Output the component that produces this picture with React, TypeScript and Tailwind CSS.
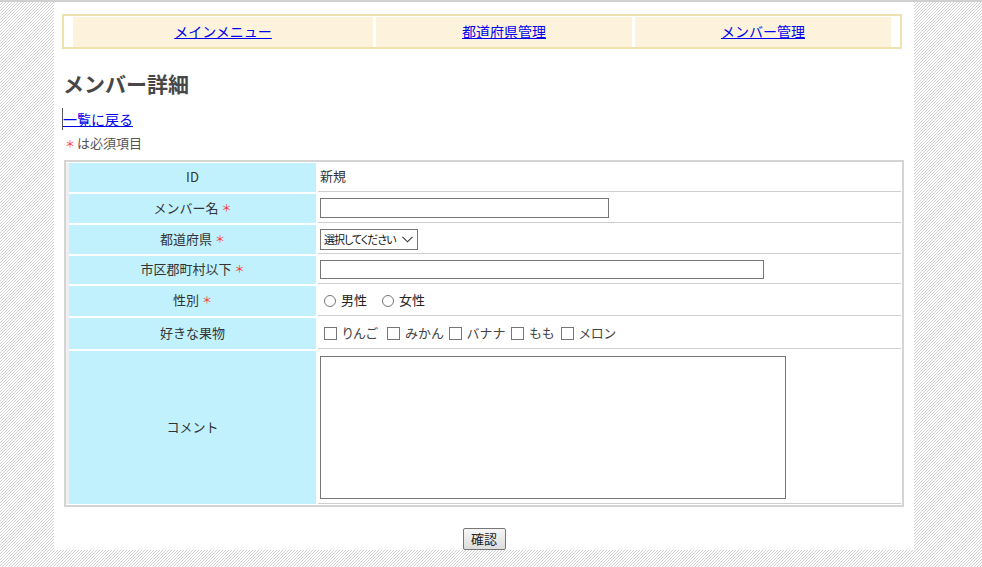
import React from "react";

function Req() {
  return <span className="ml-[3px] text-[10px] text-[#ff3030] leading-none">＊</span>;
}

function LeftCell({ children }: { children: React.ReactNode }) {
  return (
    <div className="flex items-center justify-center bg-[#c1f1fd] pb-[2px] text-[13px] text-[#333]">
      {children}
    </div>
  );
}

function RightCell({ children, className = "" }: { children?: React.ReactNode; className?: string }) {
  return (
    <div className={"flex border-b border-[#cfcfcf] pl-[2px] text-[13px] text-[#333] " + className}>
      {children}
    </div>
  );
}

function Radio({ label, className = "" }: { label: string; className?: string }) {
  return (
    <span className={"inline-flex items-center gap-[5px] " + className}>
      <span className="inline-block h-[12px] w-[12px] rounded-full border border-[#767676] bg-white" />
      <span className="mb-[1px] text-[13px] text-[#222]">{label}</span>
    </span>
  );
}

function Check({ label, className = "" }: { label: string; className?: string }) {
  return (
    <span className={"inline-flex items-center gap-[5px] " + className}>
      <span className="inline-block h-[13px] w-[13px] shrink-0 border border-[#767676] bg-white" />
      <span className="mb-[1px] whitespace-nowrap text-[13px] tracking-[0.5px] text-[#444] [font-feature-settings:'palt']">{label}</span>
    </span>
  );
}

export default function App() {
  return (
    <div className="h-[567px] w-full overflow-hidden border-t-2 border-[#d0d0d0] bg-[repeating-linear-gradient(135deg,#d0d0d0_0px,#d0d0d0_0.7071px,#ffffff_0.7071px,#ffffff_2.1213px)] font-['Noto_Sans_CJK_JP','Liberation_Sans',sans-serif]">
      <div className="ml-[54px] flex w-[860px] flex-col bg-white pt-[12px]">
        {/* nav */}
        <div className="ml-[8px] flex w-[840px] gap-[3px] border-2 border-[#eee3ae] px-[9px] pt-px">
          <div className="flex h-[30px] w-[300px] items-center justify-center bg-[#fdf3dd] pb-[2px]">
            <a className="text-[14px] text-[#0000ee] underline" href="#">メインメニュー</a>
          </div>
          <div className="flex h-[30px] flex-1 items-center justify-center bg-[#fdf3dd] pb-[2px]">
            <a className="text-[14px] text-[#0000ee] underline" href="#">都道府県管理</a>
          </div>
          <div className="flex h-[30px] flex-1 items-center justify-center bg-[#fdf3dd] pb-[2px]">
            <a className="text-[14px] text-[#0000ee] underline" href="#">メンバー管理</a>
          </div>
        </div>

        {/* heading */}
        <h1 className="ml-[9px] mt-[19px] h-[30px] text-[21px] font-bold leading-[30px] text-[#474747]">
          メンバー詳細
        </h1>

        {/* back link */}
        <div className="ml-[8px] mt-[10px] flex h-[22px] items-center border-l border-[#555]">
          <a className="text-[14px] leading-[18px] text-[#0000ee] underline" href="#">一覧に戻る</a>
        </div>

        {/* required note */}
        <div className="ml-[11px] mt-[4px] flex h-[18px] items-center text-[13px] text-[#555]">
          <span className="text-[10px] text-[#ff3030]">＊</span>
          <span className="ml-[2px]">は必須項目</span>
        </div>

        {/* form table */}
        <div className="ml-[10px] mt-[8px] w-[840px] border-2 border-[#d4d4d4] pb-px pr-px pt-px">
          <div className="grid grid-cols-[247px_1fr] gap-[2px] border-l-[3px] border-[#efefef]">
            <LeftCell>ID</LeftCell>
            <RightCell className="h-[29px] items-center">
              <span className="mb-[2px]">新規</span>
            </RightCell>

            <LeftCell>
              メンバー名<Req />
            </LeftCell>
            <RightCell className="h-[29px] items-center">
              <input type="text" className="h-[20px] w-[289px] border border-[#767676] bg-white" />
            </RightCell>

            <LeftCell>
              都道府県<Req />
            </LeftCell>
            <RightCell className="h-[29px] items-center">
              <div className="flex h-[21px] w-[98px] items-center border border-[#767676] bg-white pl-[3px] pr-[4px]">
                <span className="whitespace-nowrap text-[11px] tracking-[-1px] text-[#111] [font-feature-settings:'palt']">選択してください</span>
                <svg className="ml-auto shrink-0" width="11" height="7" viewBox="0 0 11 7" fill="none">
                  <path d="M0.5 0.8 L5.5 5.8 L10.5 0.8" stroke="#333" strokeWidth="1.1" />
                </svg>
              </div>
            </RightCell>

            <LeftCell>
              市区郡町村以下<Req />
            </LeftCell>
            <RightCell className="h-[28px] items-center">
              <input type="text" className="h-[19px] w-[444px] border border-[#767676] bg-white" />
            </RightCell>

            <LeftCell>
              性別<Req />
            </LeftCell>
            <RightCell className="h-[30px] items-center">
              <Radio label="男性" className="ml-[4px]" />
              <Radio label="女性" className="ml-[15px]" />
            </RightCell>

            <LeftCell>好きな果物</LeftCell>
            <RightCell className="h-[31px] items-center">
              <Check label="りんご" className="ml-[4px] w-[63px]" />
              <Check label="みかん" className="w-[62px]" />
              <Check label="バナナ" className="w-[62px]" />
              <Check label="もも" className="w-[50px]" />
              <Check label="メロン" />
            </RightCell>

            <LeftCell>コメント</LeftCell>
            <RightCell className="h-[153px] items-start">
              <textarea className="mt-[5px] block h-[143px] w-[466px] resize-none border border-[#767676] bg-white" />
            </RightCell>
          </div>
        </div>

        {/* submit */}
        <div className="mt-[21px] flex justify-center">
          <button className="h-[22px] w-[43px] rounded-[2px] border border-[#767676] bg-gradient-to-b from-[#f6f6f6] to-[#dddddd] text-[13px] leading-[20px] text-[#222]">
            確認
          </button>
        </div>
      </div>
    </div>
  );
}
